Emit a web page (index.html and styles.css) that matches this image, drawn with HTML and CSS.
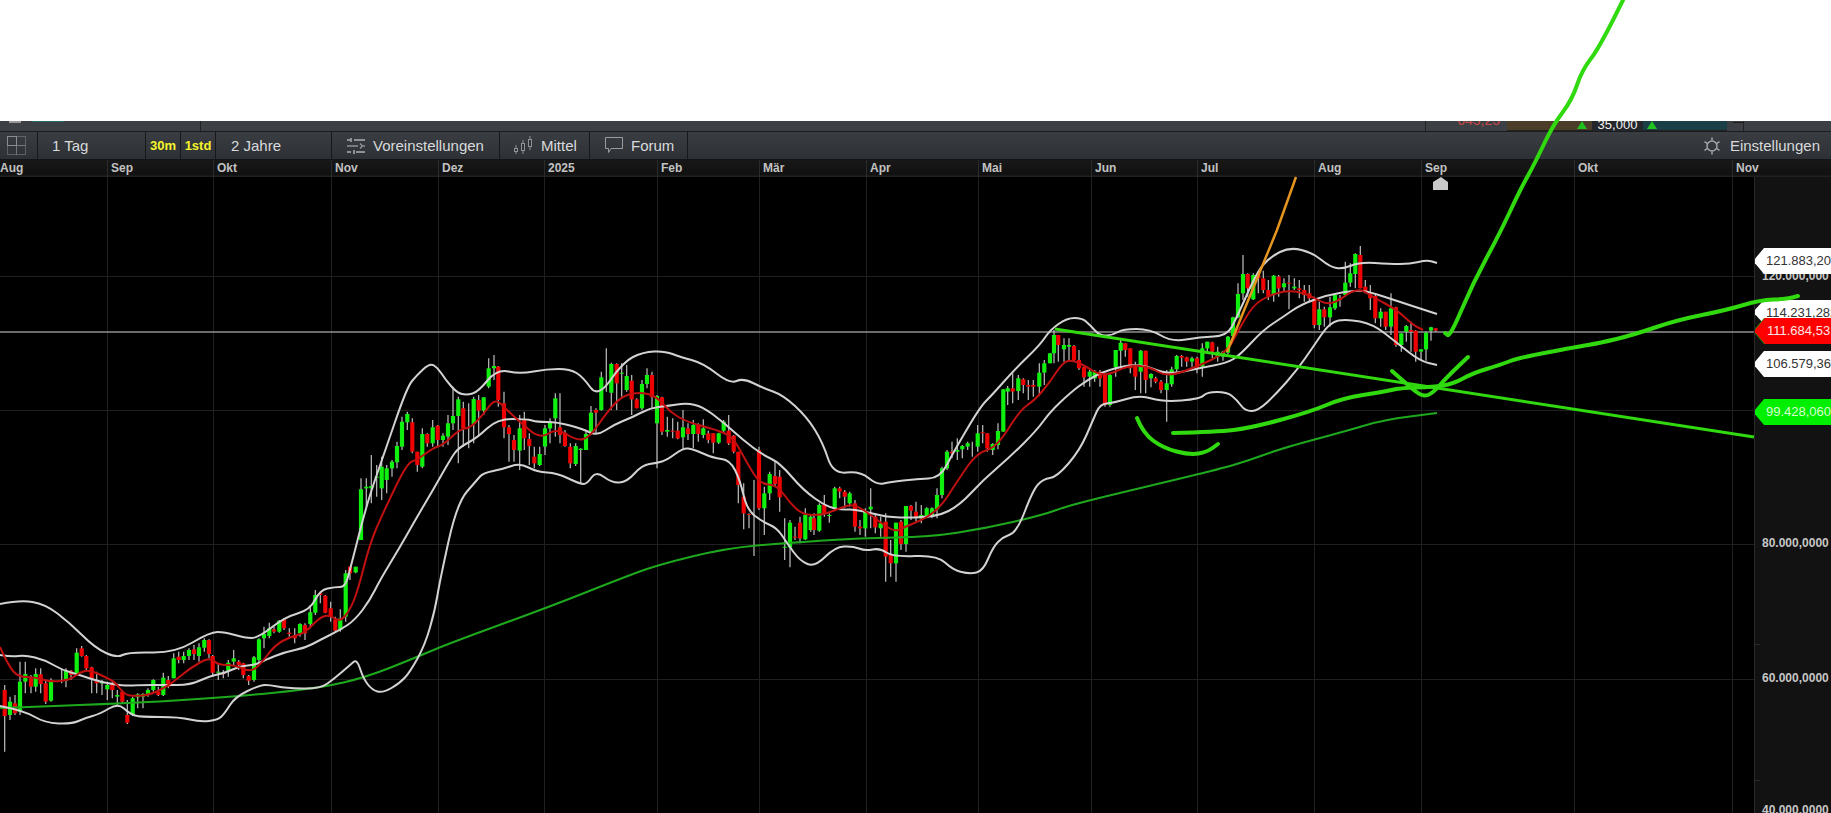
FILE: index.html
```html
<!DOCTYPE html>
<html lang="de">
<head>
    <meta charset="UTF-8">
    <title>Chart</title>
    <link rel="stylesheet" href="styles.css">
</head>
<body>
    <div class="blank-top"></div>

    <div class="quote-strip">
        <div class="quote-cell quote-first"><span class="quote-blip"></span><span class="quote-blip-teal"></span></div>
        <div class="quote-cell quote-wide"></div>
        <div class="quote-cell quote-price">645,25</div>
        <div class="quote-cell quote-bid"><span class="quote-arrow"></span></div>
        <div class="quote-cell quote-size">35,000</div>
        <div class="quote-cell quote-ask"><span class="quote-arrow"></span></div>
        <div class="quote-cell quote-dash"><span></span></div>
    </div>

    <div class="toolbar">
        <div class="tool tool-layout">
            <svg width="20" height="20" viewBox="0 0 20 20" fill="none" stroke="#8b8e91">
                <rect x="0.5" y="0.5" width="9" height="9"/>
                <rect x="0.5" y="9.5" width="9" height="9" stroke-dasharray="1 1"/>
                <rect x="9.5" y="0.5" width="9" height="9" stroke-dasharray="1 1"/>
                <rect x="9.5" y="9.5" width="9" height="9" stroke-dasharray="1 1"/>
            </svg>
        </div>
        <div class="tool tool-period">1 Tag</div>
        <div class="tool tool-mark">30m</div>
        <div class="tool tool-mark">1std</div>
        <div class="tool tool-range">2 Jahre</div>
        <div class="tool tool-presets">
            <svg width="19" height="18" viewBox="0 0 19 18" fill="none" stroke="#8f9295" stroke-width="2">
                <path d="M3 3h-3M18 3H7M4 1v4"/>
                <path d="M0 9h11M18 9h-3M13 6.500l2.500 2.500L13 11.500" stroke-width="1.500"/>
                <path d="M4 15h-4M18 15H9M7 13v4"/>
            </svg>
            Voreinstellungen
        </div>
        <div class="tool tool-size">
            <svg width="20" height="20" viewBox="0 0 20 20" fill="none" stroke="#8f9295">
                <path d="M3 9v9M10 4v14M17 0v14"/>
                <rect x="1.500" y="12.500" width="3" height="3" fill="#2f3236"/>
                <rect x="8.500" y="7.500" width="3" height="7" fill="#2f3236"/>
                <rect x="15.500" y="3.500" width="3" height="7" fill="#2f3236"/>
            </svg>
            Mittel
        </div>
        <div class="tool tool-forum">
            <svg width="18" height="17" viewBox="0 0 18 17" fill="none" stroke="#9a9da0">
                <path d="M0.500 0.500h17v11H6l-2.500 4v-4h-3z"/>
            </svg>
            Forum
        </div>
        <div class="tool tool-fill"></div>
        <div class="tool tool-settings">
            <svg width="18" height="18" viewBox="0 0 18 18" fill="none" stroke="#a3a6a9" stroke-width="1.500">
                <circle cx="9" cy="9" r="5"/>
                <path d="M9 0.500v3M9 14.500v3M1.500 4.700l2.700 1.600M13.800 11.700l2.700 1.600M1.500 13.300l2.700-1.600M13.800 6.300l2.700-1.600"/>
            </svg>
            Einstellungen
        </div>
    </div>

    <div class="date-axis">
        <span class="date-first" style="width:107px">Aug</span>
        <span style="width:106px">Sep</span>
        <span style="width:118px">Okt</span>
        <span style="width:107px">Nov</span>
        <span style="width:106px">Dez</span>
        <span style="width:113px">2025</span>
        <span style="width:102px">Feb</span>
        <span style="width:107px">Mär</span>
        <span style="width:112px">Apr</span>
        <span style="width:113px">Mai</span>
        <span style="width:106px">Jun</span>
        <span style="width:117px">Jul</span>
        <span style="width:107px">Aug</span>
        <span style="width:153px">Sep</span>
        <span style="width:158px">Okt</span>
        <span style="width:99px">Nov</span>
    </div>

    <div class="chart-area">
        <svg id="chart" class="plot" viewBox="0 177 1754 636">
            <g id="grid" class="grid"></g>
            <path class="last-price" d="M0 332H1754"/>
            <g id="candles"></g>
            <path id="sma" class="line-sma"/>
            <path id="upper" class="line-band"/>
            <path id="middle" class="line-band"/>
            <path id="lower" class="line-band"/>
            <path id="ma" class="line-ma"/>
            <path class="pin" d="M1441 177l7 5v8h-15v-8z"/>
        </svg>

        <div class="price-axis">
            <span class="axis-label label-120">120.000,000</span>
            <span class="axis-label label-80">80.000,0000</span>
            <span class="axis-label label-60">60.000,0000</span>
            <span class="axis-label label-40">40.000,0000</span>
            <span class="axis-tick tick-70"></span>
            <span class="axis-tick tick-50"></span>

            <div class="tag tag-white tag-upper">121.883,200</div>
            <div class="tag tag-white tag-middle">114.231,282</div>
            <div class="tag tag-green-dark tag-under"></div>
            <div class="tag tag-red tag-last">111.684,531</div>
            <div class="tag tag-white tag-lower">106.579,364</div>
            <div class="tag tag-green tag-sma">99.428,060</div>
        </div>
    </div>

    <!-- marker lines drawn on top of the screenshot -->
    <svg class="scribbles" viewBox="0 0 1831 813">
        <path class="scribble-orange" d="M1227 352L1277 230L1296 177"/>
        <path class="scribble-line" d="M1055 329L1754 437"/>
        <path class="scribble" data-points="1623,0 1600,47 1582,70 1572,100 1553,125 1535,163 1520,190 1500,233 1473,283 1450,337 1445,333"/>
        <path class="scribble" data-points="1173,433 1217,432 1250,428 1310,412 1343,398 1383,392 1400,388 1433,387 1453,384 1473,373 1500,365 1518,358 1576,347 1600,343 1633,335 1677,320 1727,310 1760,300 1787,299 1798,296"/>
        <path class="scribble" data-points="1137,418 1143,433 1163,448 1190,455 1207,452 1218,444"/>
        <path class="scribble" data-points="1392,371 1410,387 1423,397 1433,393 1447,377 1468,357"/>
    </svg>

    <script src="chart.js"></script>
</body>
</html>
```

FILE: styles.css
```css
* {
    box-sizing: border-box;
    margin: 0;
    padding: 0;
}

html, body {
    width: 1831px;
    height: 813px;
    overflow: hidden;
}

body {
    position: relative;
    display: flex;
    flex-direction: column;
    background-color: #000;
    font-family: "Liberation Sans", Arial, sans-serif;
}

.blank-top {
    flex: none;
    height: 121px;
    background-color: #fff;
}

/* Rest of the quote row, mostly cut off by the white area */
.quote-strip {
    flex: none;
    display: flex;
    height: 11px;
    overflow: hidden;
    background-color: #3c3f43;
    border-bottom: 1px solid #1b1c1e;
}

.quote-cell {
    position: relative;
    flex: none;
    display: flex;
    align-items: flex-end;
    height: 10px;
}

.quote-first {
    width: 201px;
    border-right: 1px solid #222;
}

.quote-blip {
    position: absolute;
    top: 0;
    left: 9px;
    width: 12px;
    height: 2px;
    background-color: #999;
}

.quote-blip-teal {
    position: absolute;
    top: 0;
    left: 32px;
    width: 32px;
    height: 1px;
    background-color: #2b6a75;
}

.quote-wide {
    width: 1225px;
    border-right: 1px solid #222;
}

.quote-price {
    width: 81px;
    justify-content: flex-end;
    padding-right: 7px;
    padding-bottom: 4px;
    font-size: 14px;
    line-height: 14px;
    color: #c94848;
}

.quote-bid {
    width: 85px;
    background-color: #4c3d29;
    border-bottom: 1px solid #222;
}

.quote-size {
    width: 51px;
    justify-content: center;
    font-size: 13px;
    line-height: 12px;
    color: #f2f2f2;
    background-color: #23262a;
}

.quote-ask {
    width: 84px;
    background-color: #1b3f47;
    border-bottom: 1px solid #222;
}

.quote-arrow {
    position: absolute;
    top: 0;
    width: 0;
    height: 0;
    border-left: 5px solid transparent;
    border-right: 5px solid transparent;
    border-bottom: 8px solid #1fc41f;
}

.quote-bid .quote-arrow {
    left: 70px;
}

.quote-ask .quote-arrow {
    left: 4px;
}

.quote-dash {
    width: 17px;
    border-right: 1px solid #222;
}

.quote-dash span {
    position: absolute;
    top: 1px;
    left: 6px;
    width: 10px;
    height: 1px;
    background-color: #1a1a1a;
}

.toolbar {
    flex: none;
    display: flex;
    height: 28px;
    background: linear-gradient(#3a3d41, #2d3034);
    border-bottom: 1px solid #141516;
    color: #d8dadc;
    font-size: 15px;
}

.tool {
    flex: none;
    display: flex;
    align-items: center;
    height: 100%;
    border-right: 1px solid #17181a;
    white-space: nowrap;
}

.tool-layout {
    width: 38px;
    padding-left: 7px;
}

.tool-period {
    width: 108px;
    padding-left: 14px;
}

.tool-mark {
    width: 35px;
    justify-content: center;
    font-size: 13px;
    font-weight: bold;
    color: #f6f42b;
}

.tool-range {
    width: 116px;
    padding-left: 15px;
}

.tool-presets {
    width: 168px;
    padding-left: 15px;
    gap: 7px;
}

.tool-size {
    width: 90px;
    padding-left: 13px;
    gap: 8px;
}

.tool-forum {
    width: 98px;
    padding-left: 15px;
    gap: 8px;
}

.tool-fill {
    flex: 1;
    border-right: none;
}

.tool-settings {
    padding-right: 11px;
    gap: 9px;
    border-right: none;
}

.date-axis {
    flex: none;
    display: flex;
    height: 17px;
    overflow: hidden;
    background: linear-gradient(#181818, #111 85%, #242424);
    color: #c2c2c2;
    font-size: 12px;
    font-weight: bold;
    line-height: 16px;
}

.date-axis span {
    flex: none;
    padding-left: 3px;
    border-left: 1px solid #2b2b2b;
}

.date-axis .date-first {
    padding-left: 0;
    border-left: none;
}

.chart-area {
    position: relative;
    flex: 1;
    display: flex;
}

.plot {
    flex: none;
    width: 1754px;
    height: 636px;
    background-color: #000;
    filter: blur(0.4px);
}

.grid path {
    stroke: #202020;
    stroke-width: 1;
    fill: none;
}

.last-price {
    stroke: #8f8f8f;
    stroke-width: 1.500;
    fill: none;
}

.wick {
    stroke: #c0c0c0;
    stroke-width: 1.200;
}

.body-up {
    fill: #0ff00e;
}

.body-down {
    fill: #ee0202;
}

.line-band {
    fill: none;
    stroke: #d2d2d2;
    stroke-width: 2;
    stroke-linejoin: round;
}

.line-ma {
    fill: none;
    stroke: #c01010;
    stroke-width: 2;
    stroke-linejoin: round;
}

.line-sma {
    fill: none;
    stroke: #1ea81e;
    stroke-width: 2;
    stroke-linejoin: round;
}

.pin {
    fill: #c9c9c9;
}

.price-axis {
    position: relative;
    flex: 1;
    overflow: hidden;
    background-color: #121212;
    border-left: 1px solid #2a2a2a;
}

.axis-label {
    position: absolute;
    left: 7px;
    font-size: 12px;
    font-weight: bold;
    line-height: 14px;
    color: #c6c6c6;
    white-space: nowrap;
}

.label-120 {
    top: 92px;
}

.label-80 {
    top: 359px;
}

.label-60 {
    top: 494px;
}

.label-40 {
    top: 626px;
}

.axis-tick {
    position: absolute;
    left: 0;
    width: 5px;
    height: 1px;
    background-color: #2a2a2a;
}

.tick-70 {
    top: 467px;
}

.tick-50 {
    top: 603px;
}

.tag {
    position: absolute;
    left: -2px;
    width: 90px;
    height: 26px;
    padding-left: 13px;
    font-size: 13px;
    line-height: 26px;
    white-space: nowrap;
    clip-path: polygon(0 50%, 11px 0, 100% 0, 100% 100%, 11px 100%);
}

.tag-white {
    background-color: #fff;
    color: #333;
}

.tag-red {
    background-color: #fe0000;
    color: #ffe6e6;
}

.tag-green {
    background-color: #00ee00;
    color: #d9ffd0;
}

.tag-green-dark {
    background-color: #1f9b10;
}

.tag-upper {
    top: 71px;
}

.tag-middle {
    top: 123px;
    height: 24px;
}

.tag-under {
    top: 141px;
}

.tag-last {
    top: 141px;
    left: -1px;
}

.tag-lower {
    top: 174px;
}

.tag-sma {
    top: 222px;
}

.scribbles {
    position: absolute;
    top: 0;
    left: 0;
    width: 1831px;
    height: 813px;
    pointer-events: none;
}

.scribble {
    fill: none;
    stroke: #31d90f;
    stroke-width: 4;
    stroke-linecap: round;
    stroke-linejoin: round;
}

.scribble-line {
    fill: none;
    stroke: #31d90f;
    stroke-width: 3;
}

.scribble-orange {
    fill: none;
    stroke: #e5951f;
    stroke-width: 2.500;
}
```

FILE: chart.js
```js
const SVG_NS = 'http://www.w3.org/2000/svg';

// Bands and averages in page pixels
const UPPER = '0,604 20,600 45,604 70,623 95,648 117,658 128,652 175,653 210,632 225,632 245,638 258,638 285,617 310,610 320,590 335,587 345,587 350,570 367,503 383,457 407,387 417,375 430,363 438,368 445,379 457,393 467,395 478,392 497,369 520,374 547,369 570,369 583,377 598,398 623,362 643,352 665,351 680,357 703,363 730,384 743,378 763,388 783,395 807,417 823,443 833,474 860,471 877,485 890,482 917,479 940,478 953,453 980,407 992,395 1016,368 1040,345 1050,330 1067,318 1082,318 1090,325 1100,336 1113,335 1123,329 1150,329 1172,342 1200,337 1227,336 1237,317 1257,272 1270,257 1290,247 1313,253 1330,267 1343,269 1360,262 1390,264 1410,264 1427,260 1437,263';
const MIDDLE = '0,655 12,657 25,655 45,660 62,670 80,675 100,682 125,686 140,685 165,685 190,685 210,676 225,673 240,666 255,665 265,660 285,652 305,648 320,640 340,630 355,620 370,600 380,580 400,547 417,517 433,490 450,460 458,448 477,438 497,419 527,419 537,422 557,422 583,429 597,436 613,425 633,417 650,408 667,406 687,403 703,407 723,422 743,440 763,455 780,463 803,490 827,507 843,510 853,509 870,513 893,518 937,517 960,505 983,480 1010,457 1037,430 1050,412 1070,393 1087,380 1107,370 1140,363 1167,375 1200,368 1227,363 1240,355 1263,330 1283,317 1300,305 1327,295 1357,290 1370,292 1397,301 1437,314';
const LOWER = '0,706 25,711 45,723 72,724 85,718 100,714 118,703 130,714 140,717 180,717 200,722 218,720 225,713 235,697 260,685 270,685 285,688 320,689 335,678 350,665 357,659 363,678 372,690 383,693 400,683 410,672 425,645 435,610 440,580 457,503 477,480 483,473 503,469 520,463 537,472 557,473 580,484 587,484 596,471 612,483 627,482 642,465 657,463 667,460 683,448 693,449 713,458 730,460 740,480 747,510 763,522 777,528 787,543 800,561 815,567 835,547 853,546 865,551 880,548 893,557 937,555 953,570 970,574 983,571 993,547 1003,537 1017,532 1033,490 1043,479 1057,477 1080,450 1093,420 1100,404 1113,403 1140,395 1163,402 1200,399 1207,392 1227,392 1237,400 1245,411 1258,411 1277,393 1297,370 1313,347 1330,322 1347,319 1373,324 1397,343 1420,361 1437,365';
const MA = '0,647 8,665 18,677 35,677 50,682 70,680 80,672 90,670 105,677 115,682 125,695 135,696 150,695 170,685 190,668 210,657 218,665 235,665 250,672 260,665 275,645 290,637 305,633 320,617 330,615 340,622 350,610 358,590 370,543 383,513 407,463 417,460 433,448 443,445 460,429 470,428 483,415 495,398 507,410 520,422 540,439 557,428 577,441 590,437 607,412 623,395 643,392 657,397 670,412 687,422 717,430 733,437 747,463 760,484 777,485 790,503 803,515 823,515 840,508 853,504 867,512 893,532 903,528 937,513 960,477 977,453 997,447 1020,410 1035,400 1050,382 1063,362 1073,360 1087,367 1103,377 1130,365 1150,367 1167,377 1197,367 1227,352 1237,333 1253,305 1270,295 1290,290 1310,295 1330,307 1357,287 1373,297 1397,310 1413,325 1423,330';
const SMA = '0,708 117,704 233,697 320,688 367,677 417,657 450,643 549,607 617,580 657,565 727,548 787,543 860,538 930,537 987,528 1043,515 1070,505 1153,485 1220,469 1250,460 1283,448 1350,430 1383,420 1437,413';

// Candles read in blocks: block offset, then [x, wick top, body top, body bottom, wick bottom, red?]
// x and y inside a block are in thirds of a pixel
const BLOCKS = [
    { x: 0, y: 580, candles: [
        [14,315,330,408,515,1],[30,350,365,405,420],[45,345,370,400,405,1],[60,245,305,395,405],[76,245,282,305,340],
        [93,285,295,320,340,1],[107,265,282,320,335],[122,265,283,312,340,1],[137,300,310,365,372,1],[153,295,300,362,365],
        [185,268,300,301,310],[198,265,272,302,322],[213,270,272,285,300,1],[230,205,218,280,285],[245,198,205,228,230,1],
        [259,225,228,265,270,1],[275,260,262,295,340,1],[290,275,300,310,340,1],[306,300,305,310,345],[322,305,315,328,360],
        [337,305,312,330,355,1],[352,330,345,350,375],[367,330,335,365,370,1],[382,360,405,428,432,1],[398,350,355,405,408],
        [413,340,343,352,385],[429,340,342,350,385],[444,325,330,345,350],[460,298,300,330,335],[475,320,335,345,348,1],
        [490,278,293,345,348],[505,288,300,320,325,1],[521,220,235,295,295],[536,215,230,240,250,1],[551,215,228,240,250],
        [567,205,210,228,240],[582,195,208,222,240,1],[597,190,202,228,245],[613,175,180,203,215],[627,178,180,222,235,1],
        [638,225,228,278,290,1],[655,250,275,278,300],[670,270,280,283,295,1],[685,240,248,272,290],[701,210,235,245,255],
        [716,240,245,255,270,1],[730,248,250,285,295,1],[746,285,288,302,315,1],[762,228,232,300,305],[777,175,178,240,250],
        [792,140,162,175,205],[808,128,145,168,175],[822,140,148,155,160,1],[838,120,122,155,158],[852,115,118,145,150,1],
        [868,145,158,162,170,1],[884,145,165,175,190,1],[900,130,132,160,170],[915,130,135,160,180,1],[931,75,97,132,145],
        [946,30,45,98,105],[961,35,40,45,70,1],[976,45,47,98,100,1],[992,65,85,110,125,1],[1006,110,118,152,155,1],
        [1021,88,115,150,155],[1037,-30,-20,110,125]
    ] },
    { x: 350, y: 340, candles: [
        [0,680,680,700,720,1],[17,680,680,697,700],[33,415,448,600,600],[49,415,440,445,500],[64,345,438,445,490],
        [80,375,410,412,470],[95,350,380,445,480],[110,375,385,420,460],[126,360,365,385,410],[141,305,318,367,385],
        [156,230,245,320,330],[172,215,222,247,270],[187,235,247,335,340,1],[202,335,335,375,395,1],[217,265,282,380,385],
        [232,280,282,310,320,1],[248,240,262,310,320],[263,255,257,300,320,1],[279,280,287,300,320],[294,225,250,290,315],
        [309,140,228,250,270],[325,170,178,228,370],[340,185,205,265,320,1],[356,190,250,251,325],[371,170,177,252,310],
        [386,165,180,212,290,1],[401,172,172,212,225],[416,55,85,140,145],[432,45,78,85,120],[445,78,80,180,200,1],
        [462,155,190,262,295,1],[477,255,262,282,365,1],[492,285,300,330,365,1],[509,225,265,332,390],[523,215,240,295,330,1],
        [538,280,297,318,375,1],[553,320,350,370,385,1],[569,320,342,375,378],[585,255,265,320,345],[600,235,248,265,310],
        [616,160,175,235,290],[630,160,262,285,310,1],[645,270,278,318,320,1],[661,310,320,370,385,1],[677,310,318,372,378],
        [692,325,326,330,430],[708,270,282,330,330],[723,198,218,280,285],[738,205,210,218,280,1],[754,95,112,210,212],
        [769,25,100,101,155],[784,68,72,158,210],[800,70,72,130,210,1],[815,70,98,100,170],[830,75,108,150,155],
        [845,105,122,178,225,1],[860,175,178,205,205,1],[876,120,132,205,210],[891,85,105,132,145],[906,95,105,172,205,1],
        [921,165,168,250,385],[936,170,172,275,285,1],[952,230,270,275,290],[968,235,272,275,295,1],[983,245,272,295,298,1],
        [999,210,262,292,330],[1014,250,265,282,300,1],[1030,240,255,282,325],[1045,250,253,282,305,1],[1060,238,265,285,295],
        [1075,272,280,300,310,1],[1090,280,280,308,340,1],[1106,278,280,308,312],[1121,240,245,272,280],[1136,225,272,310,315,1],
        [1151,285,287,335,340,1],[1165,335,335,435,490,1],[1181,430,470,520,568,1],[1197,520,522,525,565,1],[1212,420,520,521,648],
        [1227,320,330,505,510,1],[1243,440,460,505,585],[1259,395,402,460,480],[1275,365,408,432,440,1],[1289,390,410,472,515,1],
        [1304,535,620,622,660],[1320,540,548,622,682],[1335,560,590,592,600,1],[1350,530,548,595,610,1],[1366,505,525,598,600],
        [1382,525,530,570,575],[1392,520,535,570,585,1],[1408,490,495,572,575],[1423,465,495,520,530,1],[1438,520,525,527,548],
        [1454,440,445,505,510],[1469,440,445,455,475,1],[1484,450,455,470,505,1],[1499,455,460,490,500]
    ] },
    { x: 720, y: 400, candles: [
        [405,300,310,380,395,1],[420,360,380,385,405,1],[436,325,335,385,410],[452,265,320,328,385],[466,340,350,382,400,1],
        [482,350,370,385,410],[497,340,365,470,545,1],[512,420,465,490,530,1],[528,368,368,490,545],[543,360,365,432,450,1],
        [558,318,318,432,455],[573,315,318,332,360,1],[588,305,335,350,365,1],[604,315,345,355,370],[620,322,325,348,355],
        [636,322,325,345,355],[651,265,285,328,355],[666,200,205,285,295],[681,150,155,205,210],[696,125,155,160,175,1],
        [712,115,150,155,180],[727,135,138,148,175],[743,125,130,140,150],[757,125,140,141,170],[773,75,100,140,155],
        [788,75,97,100,130,1],[802,100,100,145,155,1],[818,130,132,150,165],[834,70,93,135,148]
    ] },
    { x: 990, y: 310, candles: [
        [40,238,238,365,365],[53,228,235,245,285],[68,190,235,245,280,1],[85,195,205,243,270],[100,205,208,225,250,1],
        [115,210,225,230,270,1],[130,210,225,230,260,1],[148,160,188,230,258],[163,150,160,188,225]
    ] },
    { x: 1050, y: 230, candles: [
        [0,370,370,400,400],[12,300,315,370,400],[25,315,315,345,395,1],[42,325,345,358,395],[57,325,345,350,395],
        [72,345,348,390,395,1],[87,360,390,415,420,1],[102,410,412,442,470,1],[119,420,425,440,470],[134,420,425,445,455],
        [150,420,425,445,470,1],[165,430,430,525,530,1],[180,430,435,525,530],[197,360,360,412,440],[212,330,338,362,420],
        [226,340,340,360,380,1],[241,355,355,415,430,1],[256,395,410,440,480,1],[272,360,362,425,490],[287,362,362,450,490,1],
        [303,430,432,445,472],[317,440,445,455,460,1],[333,450,455,480,490,1],[350,420,460,480,575],[365,410,418,463,470],
        [380,375,378,418,425],[395,375,378,383,410,1],[410,380,382,395,410,1],[426,380,385,395,410],[441,380,385,415,430,1],
        [457,340,355,410,440],[472,335,335,355,365],[487,335,337,365,385,1],[503,350,365,380,395],[519,362,365,380,392],
        [534,318,320,368,372],[549,260,262,318,320],[564,160,192,262,265],[579,75,132,190,210],[593,130,132,175,200,1],
        [610,130,135,208,210],[625,125,135,145,190,1],[640,122,145,180,190,1],[655,150,180,200,210,1],[671,135,137,195,215],
        [686,135,140,175,200,1],[702,145,160,172,185],[717,135,158,160,238,1],[733,145,170,175,180],[748,150,175,180,205,1],
        [763,165,180,195,215,1],[778,165,190,205,215,1],[793,200,210,285,295,1],[808,215,238,285,300],[823,230,238,262,290,1],
        [840,200,232,262,290],[855,190,195,235,240],[870,195,205,210,230,1],[886,95,158,195,200],[901,100,130,158,170],
        [916,70,72,132,175],[931,48,75,175,175,1],[946,150,170,185,190,1],[961,165,190,205,240,1],[976,190,198,265,280,1],
        [992,235,245,265,290],[1007,245,245,290,300,1],[1023,190,235,290,315],[1038,230,232,345,350,1],[1054,310,310,345,365],
        [1069,285,288,305,335],[1083,275,300,305,365,1],[1097,300,302,365,395,1],[1113,358,358,365,390],[1128,305,308,358,392],
        [1143,290,292,302,332],[1157,295,295,302,305,1]
    ] }
];

const GRID_X = [107, 213, 331, 438, 544, 657, 759, 866, 978, 1091, 1197, 1314, 1421, 1574, 1732];
const GRID_Y = [276, 410, 544, 679];

function addShape(parent, name, attrs) {
    const el = document.createElementNS(SVG_NS, name);
    Object.keys(attrs).forEach(key => el.setAttribute(key, attrs[key]));
    parent.appendChild(el);
    return el;
}

// Rounds the corners of a list of points by curving through the midpoints
function smoothPath(points) {
    const pts = points.split(' ').map(p => p.split(',').map(Number));
    let d = `M${pts[0][0]} ${pts[0][1]}`;
    for (let i = 1; i < pts.length - 1; i++) {
        const midX = (pts[i][0] + pts[i + 1][0]) / 2;
        const midY = (pts[i][1] + pts[i + 1][1]) / 2;
        d += `Q${pts[i][0]} ${pts[i][1]} ${midX} ${midY}`;
    }
    const last = pts[pts.length - 1];
    return d + `L${last[0]} ${last[1]}`;
}

function drawGrid() {
    const grid = document.getElementById('grid');
    let d = '';
    GRID_X.forEach(x => { d += `M${x + 0.5} 177V813`; });
    GRID_Y.forEach(y => { d += `M0 ${y + 0.5}H1754`; });
    addShape(grid, 'path', { d: d });
}

function drawCandles() {
    const layer = document.getElementById('candles');
    let wicks = '';
    BLOCKS.forEach(block => {
        block.candles.forEach(c => {
            const x = block.x + c[0] / 3;
            wicks += `M${x.toFixed(1)} ${(block.y + c[1] / 3).toFixed(1)}V${(block.y + c[4] / 3).toFixed(1)}`;
        });
    });
    addShape(layer, 'path', { d: wicks, class: 'wick' });

    BLOCKS.forEach(block => {
        block.candles.forEach(c => {
            const top = block.y + c[2] / 3;
            const height = Math.max((c[3] - c[2]) / 3, 1);
            if (c[3] - c[2] < 2) return; // wick only
            addShape(layer, 'rect', {
                x: (block.x + c[0] / 3 - 2.1).toFixed(1),
                y: top.toFixed(1),
                width: 4.2,
                height: height.toFixed(1),
                class: c[5] ? 'body-down' : 'body-up'
            });
        });
    });
}

drawGrid();
drawCandles();
document.getElementById('upper').setAttribute('d', smoothPath(UPPER));
document.getElementById('middle').setAttribute('d', smoothPath(MIDDLE));
document.getElementById('lower').setAttribute('d', smoothPath(LOWER));
document.getElementById('ma').setAttribute('d', smoothPath(MA));
document.getElementById('sma').setAttribute('d', smoothPath(SMA));
document.querySelectorAll('[data-points]').forEach(el => {
    el.setAttribute('d', smoothPath(el.dataset.points));
});
```
